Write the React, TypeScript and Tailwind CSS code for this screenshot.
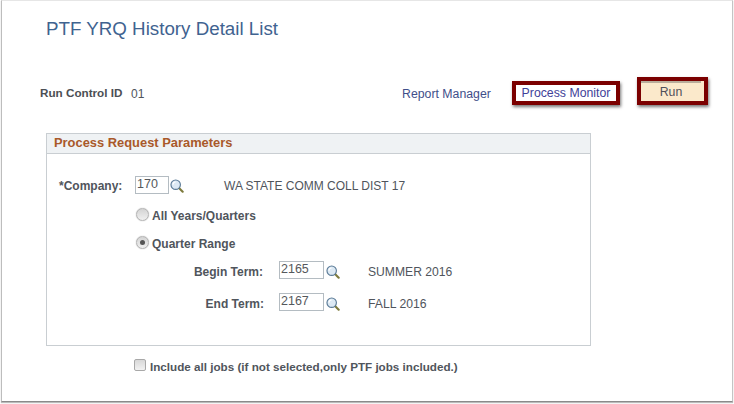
function Lookup() {
  return (
    <svg width="14" height="14" viewBox="0 0 16 16" className="shrink-0">
      <line x1="10" y1="10" x2="14.5" y2="14.5" stroke="#7d7a3c" strokeWidth="2.4" strokeLinecap="round" />
      <circle cx="6.5" cy="6.5" r="5.4" fill="#dce9f4" stroke="#5a7a96" strokeWidth="1.3" />
      <path d="M3.4 6.5a3 3 0 0 1 3-3" fill="none" stroke="#ffffff" strokeWidth="1.2" />
    </svg>
  );
}

function Field({ value, w }: { value: string; w: string }) {
  return (
    <div className={`${w} h-[18px] border border-[#b4bcc2] bg-white pl-[1px] text-[12.5px] font-normal leading-[14px] text-[#55585c]`}>
      {value}
    </div>
  );
}

function Radio({ checked }: { checked?: boolean }) {
  return (
    <span className="mb-[3px] flex h-[13px] w-[13px] items-center justify-center rounded-full border border-[#b5b5b5] bg-gradient-to-b from-[#d4d4d4] to-[#f0f0f0] shadow-[0_0_1px_#999]">
      {checked && <span className="h-[5px] w-[5px] rounded-full bg-[#555]" />}
    </span>
  );
}

export default function App() {
  return (
    <div className="h-[404px] w-[734px] overflow-hidden bg-white font-['Liberation_Sans',Arial,sans-serif]">
      <div className="ml-[1px] h-[402px] w-[732px] border-t border-r border-b border-l border-t-[#e6e6e6] border-r-[#c4c4c4] border-b-[#8a8a8a] border-l-[#bdbdbd] pl-[44px] pt-[16px] shadow-[0_1px_1px_#bbb]">
        <h1 className="h-[24px] text-[18.75px] leading-[24px] text-[#3f6390]">PTF YRQ History Detail List</h1>

        <div className="ml-[-6px] mt-[36px] flex h-[29px] items-start">
          <div className="mt-[8px] w-[91px] text-[11.7px] font-bold leading-[16px] text-[#4b4f54]">Run Control ID</div>
          <div className="mt-[9px] w-[271px] text-[12px] leading-[16px] text-[#50555c]">01</div>
          <div className="mt-[9px] w-[110px] text-[12.3px] leading-[16px] text-[#3f4f8a]">Report Manager</div>
          <div className="mt-[4px] flex h-[24px] w-[108px] items-center justify-center border-[4px] border-[#7b0000] pt-[1px] text-[12.3px] text-[#3f3f99] shadow-[1px_2px_3px_#777]">
            Process Monitor
          </div>
          <div className="ml-[17px] h-[28px] w-[71px] border-[4px] border-[#7b0000] bg-[#fbe9cb] pr-[3px] text-center text-[12.3px] leading-[16px] text-[#50505a] shadow-[1px_2px_3px_#777]">
            <div className="h-[18px] border-t-2 border-[#b9ad9b] pt-[1px]">Run</div>
          </div>
        </div>

        <section className="mt-[27px] h-[213px] w-[545px] border border-[#c9ced2]">
          <div className="h-[20px] border-b border-[#c9ced2] bg-[#eff2f4] pl-[7px] text-[12.9px] font-bold leading-[17px] text-[#a9592a]">
            Process Request Parameters
          </div>

          <div className="mt-[23px] flex h-[18px] items-center text-[12px] font-bold text-[#50555c]">
            <span className="ml-[12px] w-[76px]">*Company:</span>
            <span className="mb-[2px]"><Field value="170" w="w-[34px]" /></span>
            <span className="ml-[1px]"><Lookup /></span>
            <span className="ml-[40px] font-normal">WA STATE COMM COLL DIST 17</span>
          </div>

          <div className="mt-[12px] flex h-[17px] items-center pl-[89px] text-[12px] font-bold text-[#50555c]">
            <Radio />
            <span className="ml-[3px]">All Years/Quarters</span>
          </div>

          <div className="mt-[11px] flex h-[17px] items-center pl-[89px] text-[12px] font-bold text-[#50555c]">
            <Radio checked />
            <span className="ml-[3px]">Quarter Range</span>
          </div>

          <div className="mt-[11px] flex h-[18px] items-center text-[12px] font-bold text-[#50555c]">
            <span className="w-[216px] text-right">Begin Term:</span>
            <span className="mb-[4px] ml-[16px]"><Field value="2165" w="w-[45px]" /></span>
            <span className="ml-[2px]"><Lookup /></span>
            <span className="ml-[28px] text-[12.15px] font-normal">SUMMER 2016</span>
          </div>

          <div className="mt-[14px] flex h-[18px] items-center text-[12px] font-bold text-[#50555c]">
            <span className="w-[217px] text-right">End Term:</span>
            <span className="mb-[4px] ml-[15px]"><Field value="2167" w="w-[45px]" /></span>
            <span className="ml-[2px]"><Lookup /></span>
            <span className="ml-[28px] text-[12.2px] font-normal">FALL 2016</span>
          </div>
        </section>

        <div className="ml-[88px] mt-[13px] flex h-[16px] items-center text-[11.66px] font-bold text-[#50555c]">
          <span className="mb-[5px] h-[12px] w-[12px] rounded-[2px] border border-[#a8a8a8] bg-gradient-to-b from-[#d8d8d8] to-[#f2f2f2]" />
          <span className="ml-[4px]">Include all jobs (if not selected,only PTF jobs included.)</span>
        </div>
      </div>
    </div>
  );
}
